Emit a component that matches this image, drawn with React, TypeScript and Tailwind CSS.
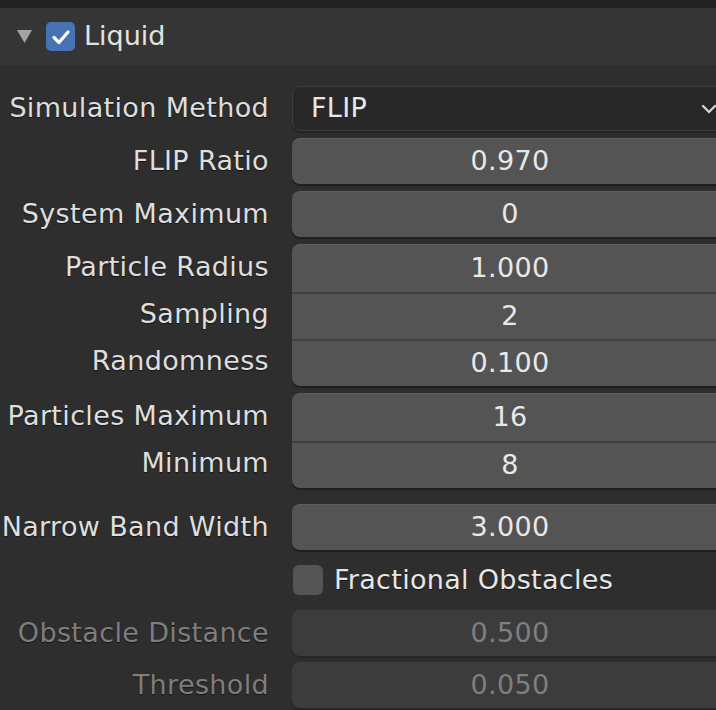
import { ReactNode } from 'react';

const labelCls =
  'w-[269px] shrink-0 flex justify-end whitespace-nowrap text-[27px] tracking-[0.35px] [text-shadow:0_1px_1px_rgba(0,0,0,0.55)]';

const Label = ({ text, muted }: { text: string; muted?: boolean }) => (
  <div className={`${labelCls} ${muted ? 'text-[#7e7e7e]' : 'text-[#dedede]'}`}>{text}</div>
);

// single numeric field, optionally greyed out
const NumField = ({ label, value, muted }: { label: string; value: string; muted?: boolean }) => (
  <div className="flex items-center h-[46px]">
    <Label text={label} muted={muted} />
    <div
      className={`ml-[23px] w-[436px] shrink-0 h-full rounded-[8px] flex items-center justify-center text-[27px] tracking-[0.3px] ${
        muted
          ? 'bg-[#3c3c3c] text-[#7f7f7f] shadow-[0_2px_1px_#262626]'
          : 'bg-[#545454] text-[#e8e8e8] border-t border-[#5e5e5e] shadow-[0_2px_1px_#1f1f1f]'
      }`}
    >
      {value}
    </div>
  </div>
);

// stacked fields sharing one rounded box
const FieldGroup = ({ rows }: { rows: { label: string; value: string }[] }) => (
  <div className="flex">
    <div className="flex flex-col">
      {rows.map(r => (
        <div key={r.label} className="h-[47px] flex items-center">
          <Label text={r.label} />
        </div>
      ))}
    </div>
    <div className="ml-[23px] w-[436px] shrink-0 rounded-[8px] overflow-hidden bg-[#545454] border-t border-[#5e5e5e] shadow-[0_2px_1px_#1f1f1f] flex flex-col">
      {rows.map((r, i) => (
        <div
          key={r.label}
          className={`h-[47px] flex items-center justify-center text-[27px] tracking-[0.3px] text-[#e8e8e8] ${
            i > 0 ? 'border-t-2 border-[#3f3f3f]' : ''
          }`}
        >
          {r.value}
        </div>
      ))}
    </div>
  </div>
);

const Row = ({ children }: { children: ReactNode }) => <div className="flex items-center">{children}</div>;

export default function App() {
  return (
    <div
      className="w-[716px] h-[710px] overflow-hidden bg-[#2e2e2e] text-[#dedede]"
      style={{ fontFamily: '"DejaVu Sans", Verdana, sans-serif' }}
    >
      <div className="h-[8px] bg-[#232323]" />

      {/* panel header */}
      <div className="h-[57px] bg-[#353535] flex items-center">
        <svg className="ml-[17px] w-[15px] h-[13px]" viewBox="0 0 15 13">
          <path d="M0 0 H15 L7.5 13 Z" fill="#a3a3a3" />
        </svg>
        <div className="ml-[14px] w-[29px] h-[29px] rounded-[5px] bg-[#4772b3] flex items-center justify-center">
          <svg className="w-[20px] h-[20px]" viewBox="0 0 20 20">
            <path d="M3 10.5 L8 15.5 L17 5" fill="none" stroke="#ffffff" strokeWidth="3.2" strokeLinecap="round" strokeLinejoin="round" />
          </svg>
        </div>
        <span className="ml-[9px] text-[27px] text-[#e2e2e2]">Liquid</span>
      </div>

      <div className="pt-[21px] flex flex-col gap-[7px]">
        <Row>
          <Label text="Simulation Method" />
          <div className="ml-[23px] w-[436px] shrink-0 h-[45px] rounded-[8px] bg-[#282828] border border-[#3d3d3d] shadow-[0_2px_1px_#222222] flex items-center pl-[18px] pr-[10px] text-[27px] tracking-[0.3px] text-[#e8e8e8]">
            <span className="flex-1">FLIP</span>
            <svg className="w-[16px] h-[10px]" viewBox="0 0 16 10">
              <path d="M2 2 L8 8 L14 2" fill="none" stroke="#d8d8d8" strokeWidth="2.2" strokeLinecap="round" />
            </svg>
          </div>
        </Row>

        <NumField label="FLIP Ratio" value="0.970" />
        <NumField label="System Maximum" value="0" />

        <FieldGroup
          rows={[
            { label: 'Particle Radius', value: '1.000' },
            { label: 'Sampling', value: '2' },
            { label: 'Randomness', value: '0.100' },
          ]}
        />

        <FieldGroup
          rows={[
            { label: 'Particles Maximum', value: '16' },
            { label: 'Minimum', value: '8' },
          ]}
        />

        <div className="mt-[9px]">
          <NumField label="Narrow Band Width" value="3.000" />
        </div>

        <div className="h-[46px] flex items-center pl-[293px]">
          <div className="w-[30px] h-[30px] rounded-[6px] bg-[#545454]" />
          <span className="ml-[11px] text-[27px] tracking-[0.3px] text-[#e6e6e6] [text-shadow:0_1px_1px_rgba(0,0,0,0.55)]">
            Fractional Obstacles
          </span>
        </div>

        <NumField label="Obstacle Distance" value="0.500" muted />
        <div className="-mt-[1px]">
          <NumField label="Threshold" value="0.050" muted />
        </div>
      </div>
    </div>
  );
}
